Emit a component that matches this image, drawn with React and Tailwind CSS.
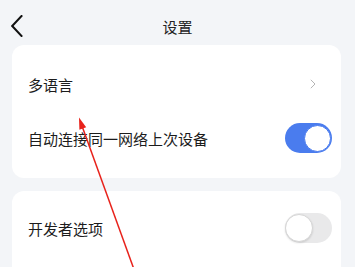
import React from "react";

const font = { fontFamily: '"Noto Sans CJK SC", "Noto Sans", sans-serif' };

function Toggle({ on }) {
  return on ? (
    <div className="w-[47px] h-[30px] rounded-full bg-[#4a7cee] flex items-center justify-end pr-[1px]">
      <div className="w-[27px] h-[27px] rounded-full bg-white border-[1.5px] border-[#4a7cee]" />
    </div>
  ) : (
    <div className="w-[47px] h-[30px] rounded-full bg-[#e9e9ea] flex items-center justify-start pl-[0px]">
      <div className="w-[28px] h-[28px] rounded-full bg-white border border-[#d6d6d6] shadow-[0_1px_2px_rgba(0,0,0,0.12)]" />
    </div>
  );
}

export default function App() {
  return (
    <div className="relative w-[355px] h-[267px] bg-[#f3f5f8] overflow-hidden" style={font}>
      <div className="h-[45px] pt-[7px] flex items-center relative">
        <div className="pl-[11px] flex items-center">
          <svg width="12" height="22" viewBox="0 0 12 22">
            <path d="M10.5 1 L1.2 11 L10.5 21" fill="none" stroke="#111" strokeWidth="2" strokeLinecap="square" strokeLinejoin="miter" />
          </svg>
        </div>
        <div className="flex-1 flex justify-center pr-[23px] text-[15px] text-[#222] leading-none">设置</div>
      </div>

      <div className="ml-[12px] mr-[14px] bg-white rounded-[12px] pt-[13px] pb-[12px]">
        <div className="h-[52px] flex items-center justify-between pl-[16px] pr-[9px]">
          <span className="text-[15px] text-[#1c1c1c] leading-none">多语言</span>
          <svg width="6" height="10" viewBox="0 0 6 10" className="mr-[16px]">
            <path d="M0.8 0.8 L5 5 L0.8 9.2" fill="none" stroke="#b5b5b5" strokeWidth="1" />
          </svg>
        </div>
        <div className="h-[56px] flex items-center justify-between pl-[16px] pr-[9px]">
          <span className="text-[15px] text-[#1c1c1c] leading-none">自动连接同一网络上次设备</span>
          <Toggle on />
        </div>
      </div>

      <div className="mt-[13px] ml-[12px] mr-[14px] bg-white rounded-[12px] pt-[10px] h-[120px]">
        <div className="h-[54px] flex items-center justify-between pl-[16px] pr-[9px]">
          <span className="text-[15px] text-[#1c1c1c] leading-none">开发者选项</span>
          <Toggle on={false} />
        </div>
      </div>

      <svg className="absolute inset-0 pointer-events-none" width="355" height="267" viewBox="0 0 355 267">
        <line x1="82" y1="126" x2="133.5" y2="268" stroke="#e8221b" strokeWidth="1.5" />
        <polygon points="79,117.5 86.2,127.2 79.4,129.7" fill="#e8221b" />
      </svg>
    </div>
  );
}
